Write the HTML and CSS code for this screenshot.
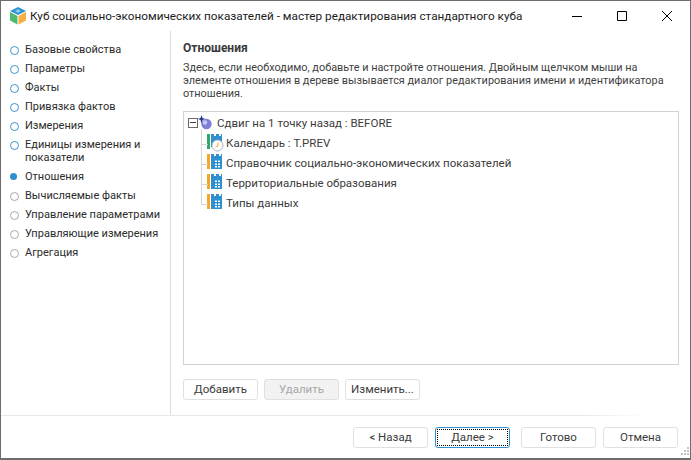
FILE: index.html
```html
<!DOCTYPE html>
<html lang="ru">
<head>
<meta charset="utf-8">
<title>Мастер</title>
<link rel="stylesheet" href="styles.css">
</head>
<body>
<div class="window">
  <header class="titlebar">
    <svg class="app-icon" width="20" height="20" viewBox="0 0 20 20">
      <path d="M10 1 18 5 10 9 2 5Z" fill="#2f92d0"/>
      <path d="M2 6 9.500 10V18.500L2 14.500Z" fill="#4fb96f"/>
      <path d="M18 6 10.500 10V18.500L18 14.500Z" fill="#f5b041"/>
      <path d="M10 3 13 5 10 7 7 5Z" fill="#8cc8ec"/>
    </svg>
    <span class="title-text">Куб социально-экономических показателей - мастер редактирования стандартного куба</span>
    <div class="window-controls">
      <svg width="10" height="10" viewBox="0 0 10 10"><path d="M0 5.500H10" stroke="#000"/></svg>
      <svg width="10" height="10" viewBox="0 0 10 10"><path d="M.5.500H9.500V9.500H.5Z" fill="none" stroke="#000"/></svg>
      <svg width="10" height="10" viewBox="0 0 10 10"><path d="M0 0 10 10M10 0 0 10" stroke="#000" stroke-width="1"/></svg>
    </div>
  </header>
  <div class="main">
    <nav class="steps">
      <div class="step done">Базовые свойства</div>
      <div class="step done">Параметры</div>
      <div class="step done">Факты</div>
      <div class="step done">Привязка фактов</div>
      <div class="step done">Измерения</div>
      <div class="step done">Единицы измерения и<br>показатели</div>
      <div class="step current">Отношения</div>
      <div class="step todo">Вычисляемые факты</div>
      <div class="step todo">Управление параметрами</div>
      <div class="step todo">Управляющие измерения</div>
      <div class="step todo">Агрегация</div>
    </nav>
    <section class="content">
      <h1 class="heading">Отношения</h1>
      <p class="description">Здесь, если необходимо, добавьте и настройте отношения. Двойным щелчком мыши на<br>элементе отношения в дереве вызывается диалог редактирования имени и идентификатора<br>отношения.</p>
      <div class="tree">
        <div class="tree-root">
          <span class="expander"></span>
          <svg class="node-icon" width="15" height="17" viewBox="0 0 15 17">
            <path d="M3.500 1 4.500 4 7.500 5 4.500 6 3.500 10 2.500 6 0 5 2.500 4Z" fill="#2b3a8c"/>
            <circle cx="8.500" cy="10" r="5.200" fill="#7f7fd8"/>
            <circle cx="7" cy="8.500" r="2.200" fill="#c9c9f4"/>
          </svg>
          <span class="node-label">Сдвиг на 1 точку назад : BEFORE</span>
        </div>
        <div class="tree-children">
          <div class="tree-child">
            <svg class="node-icon" width="18" height="20" viewBox="0 0 18 20">
              <rect x="0" y="1" width="3" height="15" fill="#2eaa62"/>
              <path d="M4 1H7V3H9V1H12V3H14V1H15V14H4Z" fill="#2f8fd0"/>
              <circle cx="10.500" cy="12.500" r="5.500" fill="#fff" stroke="#a9b2ba"/>
              <path d="M11 9.500V13L8.500 14" fill="none" stroke="#f0a030"/>
            </svg>
            <span class="node-label">Календарь : T.PREV</span>
          </div>
          <div class="tree-child">
            <svg class="node-icon" width="18" height="20" viewBox="0 0 18 20">
              <rect x="0" y="1" width="3" height="15" fill="#f5a623"/>
              <path d="M4 1H7V3H9V1H12V3H14V1H15V16H4Z" fill="#2f8fd0"/>
              <path d="M8 7.500H10V9H8ZM11 7.500H13V9H11ZM8 10.500H10V12H8ZM11 10.500H13V12H11ZM8 13H10V14.500H8ZM11 13H13V14.500H11Z" fill="#fff"/>
            </svg>
            <span class="node-label">Справочник социально-экономических показателей</span>
          </div>
          <div class="tree-child">
            <svg class="node-icon" width="18" height="20" viewBox="0 0 18 20">
              <rect x="0" y="1" width="3" height="15" fill="#f5a623"/>
              <path d="M4 1H7V3H9V1H12V3H14V1H15V16H4Z" fill="#2f8fd0"/>
              <path d="M8 7.500H10V9H8ZM11 7.500H13V9H11ZM8 10.500H10V12H8ZM11 10.500H13V12H11ZM8 13H10V14.500H8ZM11 13H13V14.500H11Z" fill="#fff"/>
            </svg>
            <span class="node-label">Территориальные образования</span>
          </div>
          <div class="tree-child">
            <svg class="node-icon" width="18" height="20" viewBox="0 0 18 20">
              <rect x="0" y="1" width="3" height="15" fill="#f5a623"/>
              <path d="M4 1H7V3H9V1H12V3H14V1H15V16H4Z" fill="#2f8fd0"/>
              <path d="M8 7.500H10V9H8ZM11 7.500H13V9H11ZM8 10.500H10V12H8ZM11 10.500H13V12H11ZM8 13H10V14.500H8ZM11 13H13V14.500H11Z" fill="#fff"/>
            </svg>
            <span class="node-label">Типы данных</span>
          </div>
        </div>
      </div>
      <div class="tree-actions">
        <button class="btn">Добавить</button>
        <button class="btn disabled">Удалить</button>
        <button class="btn">Изменить...</button>
      </div>
    </section>
  </div>
  <footer class="footer">
    <button class="btn">&lt; Назад</button>
    <button class="btn default"><span class="focus-ring">Далее &gt;</span></button>
    <button class="btn after-default">Готово</button>
    <button class="btn">Отмена</button>
    <svg class="grip" width="12" height="12" viewBox="0 0 12 12">
      <path d="M9 1h2v2H9ZM6 4h2v2H6ZM9 4h2v2H9ZM3 7h2v2H3ZM6 7h2v2H6ZM9 7h2v2H9Z" fill="#c4c4c4"/>
    </svg>
  </footer>
</div>
</body>
</html>
```

FILE: styles.css
```css
* { box-sizing: border-box; }
html, body { margin: 0; padding: 0; }
body {
  width: 691px;
  height: 460px;
  background: #fff;
  font-family: "Roboto", "Noto Sans", sans-serif;
  font-size: 12px;
  color: #2e2e2e;
  overflow: hidden;
}
.window {
  width: 691px;
  height: 460px;
  display: flex;
  flex-direction: column;
  background: #fff;
  border: 1px solid #6e6e6e;
  border-bottom-width: 2px;
}
.titlebar {
  height: 30px;
  flex: none;
  display: flex;
  align-items: center;
  padding-left: 7px;
}
.app-icon { flex: none; }
.title-text {
  margin-left: 2px;
  font-size: 11.750px;
  color: #1b1b1b;
  white-space: nowrap;
}
.window-controls {
  margin-left: auto;
  display: flex;
  gap: 35px;
  padding-right: 18px;
}
.main {
  flex: 1;
  display: flex;
  min-height: 0;
}
.steps {
  width: 170px;
  flex: none;
  padding: 12px 0 0 9px;
  border-right: 1px solid #dcdcdc;
}
.step {
  position: relative;
  padding-left: 15px;
  margin-bottom: 6px;
  font-size: 11px;
  line-height: 13px;
  white-space: nowrap;
  color: #2b2b2b;
}
.step::before {
  content: "";
  position: absolute;
  left: 0;
  top: 3px;
  width: 7px;
  height: 7px;
  border-radius: 50%;
}
.step.done::before { border: 1px solid #3a94cf; }
.step.current::before { background: #2f8fd0; }
.step.todo::before { border: 1px solid #a8a8a8; }
.content {
  flex: 1;
  min-width: 0;
  padding: 10px 11px 0 12px;
  display: flex;
  flex-direction: column;
}
.heading {
  margin: 0;
  font-size: 12px;
  font-weight: 700;
  line-height: 14px;
  color: #3a3a3a;
}
.description {
  margin: 6px 0 0;
  font-size: 10.900px;
  line-height: 13px;
  white-space: nowrap;
  color: #3f3f3f;
}
.tree {
  margin-top: 11px;
  height: 254px;
  border: 1px solid #cfd3d6;
  padding: 2px 0 0 4px;
}
.tree-root {
  display: flex;
  align-items: center;
  height: 17px;
}
.expander {
  width: 10px;
  height: 10px;
  flex: none;
  border: 1px solid #6a6a6a;
  position: relative;
}
.expander::before {
  content: "";
  position: absolute;
  left: 1px;
  top: 3px;
  width: 6px;
  height: 1px;
  background: #444;
}
.tree-root .node-icon { flex: none; }
.tree-root .node-label { margin-left: 4px; }
.tree-children {
  margin-left: 13px;
  padding-top: 2px;
}
.tree-child {
  position: relative;
  display: flex;
  align-items: center;
  height: 20px;
  padding-left: 6px;
}
.tree-child::before {
  content: "";
  position: absolute;
  left: 0;
  top: -4px;
  height: 15px;
  width: 6px;
  border-left: 1px solid #d5d5d5;
  border-bottom: 1px solid #d5d5d5;
}
.tree-child + .tree-child::before {
  top: -9px;
  height: 20px;
}
.tree-child .node-icon { flex: none; }
.node-label {
  white-space: nowrap;
  font-size: 11.500px;
  color: #3c3c3c;
}
.tree-child .node-label { margin-left: 1px; }
.tree-actions {
  display: flex;
  gap: 6px;
  margin-top: 14px;
}
.btn {
  width: 75px;
  height: 21px;
  padding: 0;
  border: 1px solid #e0e0e0;
  border-radius: 3px;
  background: #fff;
  font: inherit;
  font-size: 11.500px;
  color: #3a3a3a;
  line-height: 17px;
}
.btn.disabled {
  background: #f2f2f2;
  color: #a8a8a8;
}
.footer {
  position: relative;
  height: 43px;
  flex: none;
  display: flex;
  justify-content: flex-end;
  gap: 7px;
  padding: 12px 12px 0 0;
}
.footer::before {
  content: "";
  position: absolute;
  left: 0;
  top: 0;
  width: 645px;
  height: 1px;
  background: linear-gradient(90deg, #e8e8e8 90%, #ffffff);
}
.btn.after-default { margin-left: 4px; }
.btn.default {
  border: 1px solid #2f8fd0;
  padding: 1px;
}
.focus-ring {
  display: block;
  height: 100%;
  border: 1px dotted #000;
  line-height: 15px;
}
.grip {
  position: absolute;
  right: 0;
  bottom: 0;
}
```
